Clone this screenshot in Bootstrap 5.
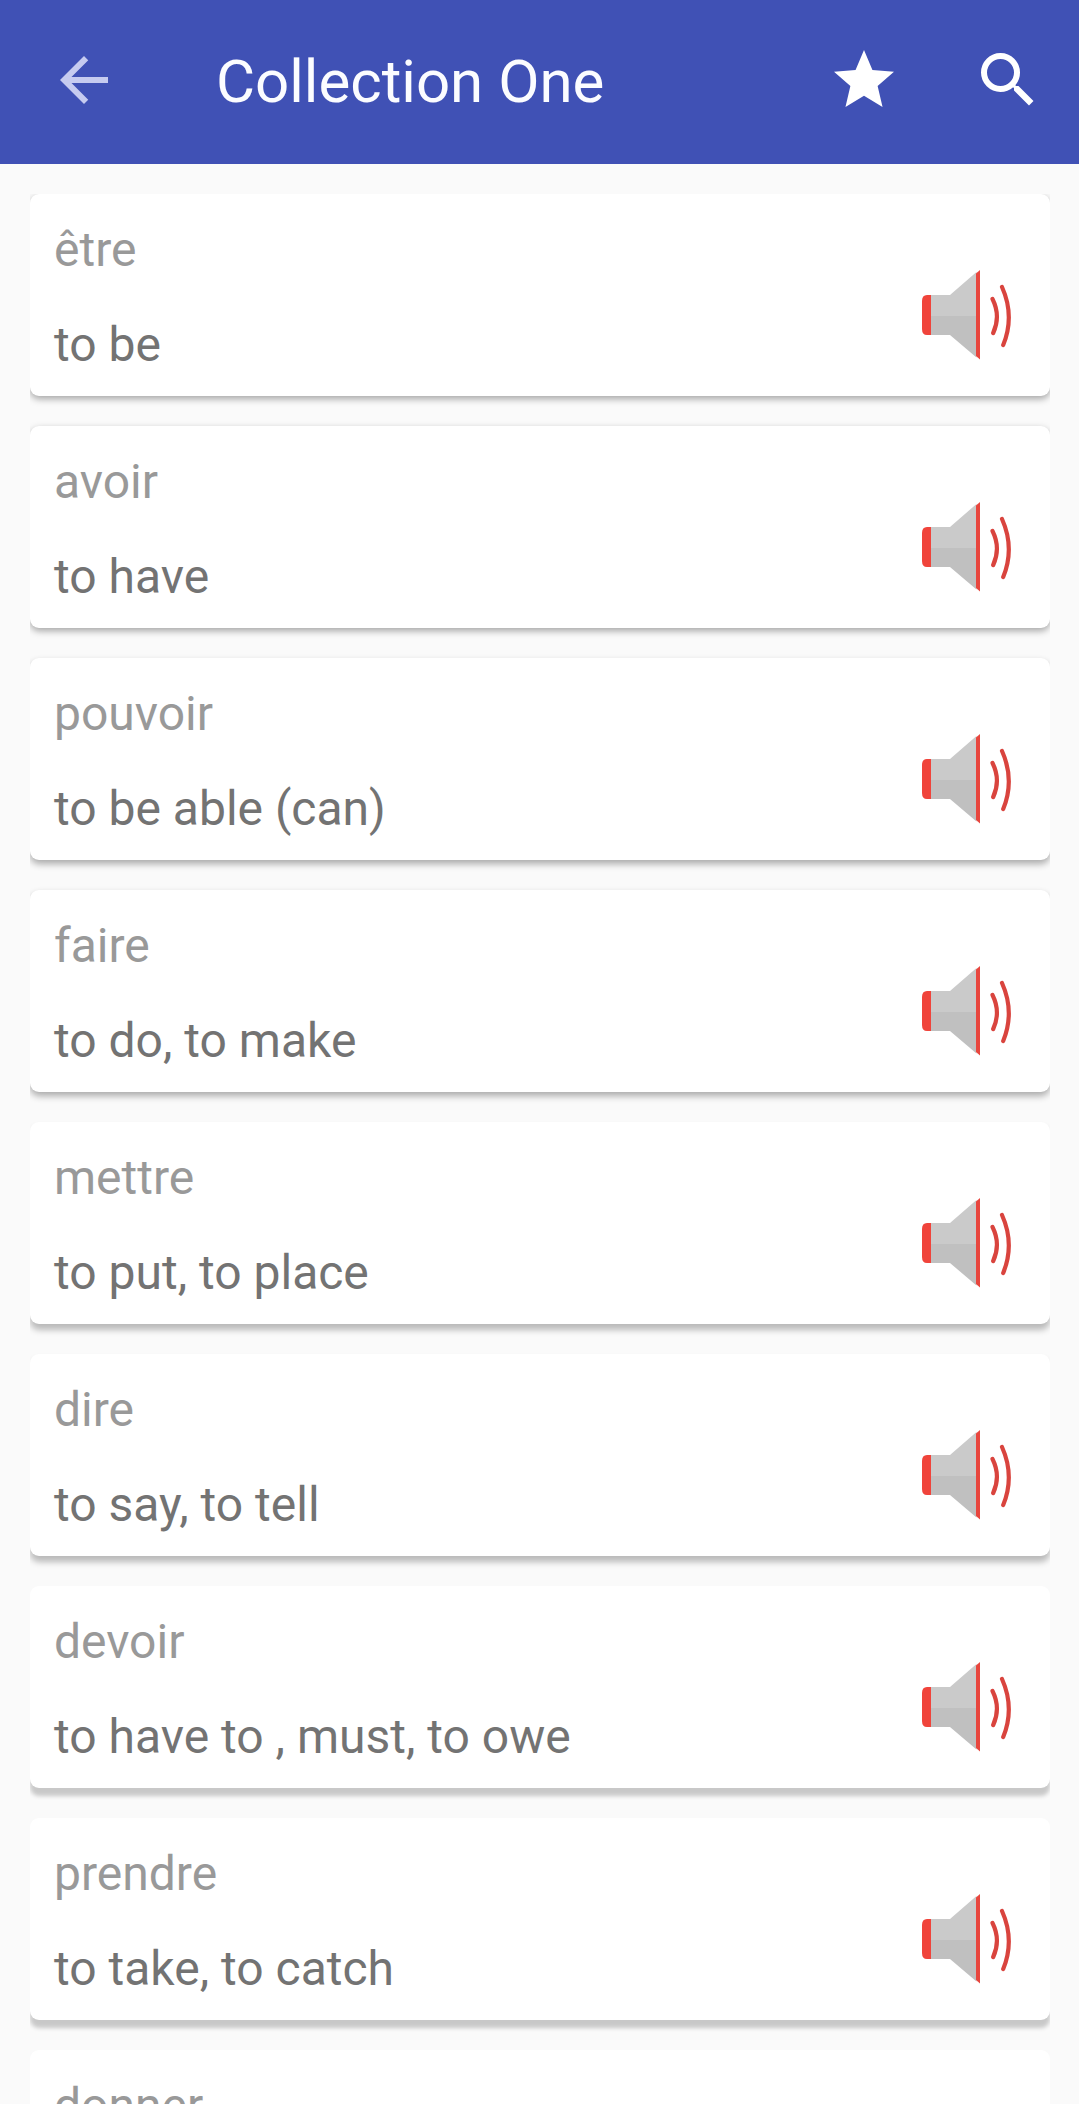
<!DOCTYPE html>
<html lang="en">
<head>
<meta charset="utf-8">
<meta name="viewport" content="width=device-width, initial-scale=1">
<title>Collection One</title>
<link href="https://cdn.jsdelivr.net/npm/bootstrap@5.3.0/dist/css/bootstrap.min.css" rel="stylesheet">
<style>
  body { background: #fafafa; font-family: Roboto, "Noto Sans", sans-serif; }
  .app-bar { height: 164px; padding: 0 35px 4px 48px; background: #4051b5; color: #fff; }
  .app-bar svg { width: 72px; height: 72px; flex: none; display: block; fill: #fff; }
  .app-bar .back-icon { fill: #c6cbf0; }
  .app-title { font-size: 60px; line-height: 72px; margin: 4px 0 0 96px; font-weight: 400; color: #fbfcff; }
  .app-actions { gap: 72px; }
  .word-list { height: 1940px; padding: 30px 29px 0 30px; gap: 30px; }
  .word-slot { clip-path: inset(-12px 0 -24px 0); flex: none; }
  .word-slot:first-child { clip-path: inset(0 0 -24px 0); }
  .word-card { --bs-card-border-radius: 9px; --bs-card-border-width: 0; height: 202px; padding: 28px 36px 0 24px; }
  .term, .meaning { font-size: 48px; line-height: 56px; white-space: pre; }
  .term { color: #999; margin-bottom: 39px; }
  .meaning { color: #737373; }
  .speaker { width: 94px; height: 96px; margin-top: 46px; flex: none; }
  .lift-1 { box-shadow: 0 3px 7px rgba(0,0,0,.34); }
  .lift-2 { box-shadow: 0 4px 7px rgba(0,0,0,.32); }
  .lift-3 { box-shadow: 0 6px 6px rgba(0,0,0,.26); }
  .lift-4 { box-shadow: 0 8px 4px rgba(0,0,0,.2); }
</style>
</head>
<body>
<svg class="d-none" aria-hidden="true">
  <symbol id="speaker" viewBox="0 0 94 96">
    <path fill="#cacaca" d="M10 27H30L56.5 4V48H10z"/>
    <path fill="#c0c0c0" d="M10 48H56.5V89.500L30 67H10z"/>
    <path fill="#f0443b" d="M11 27H7q-5 0-5 6V61q0 6 5 6h4z"/>
    <path fill="#e8463e" d="M56 5.500L60 2V91.500L56 88z"/>
    <path fill="none" stroke="#d9443e" stroke-width="4.200" stroke-linecap="round" d="M72.500 31Q81 48 73.200 65M82 19Q95 48 83.200 77"/>
  </symbol>
</svg>

<header class="app-bar d-flex align-items-center">
  <svg class="back-icon" viewBox="0 0 24 24"><path d="M20 11H7.830l5.590-5.590L12 4l-8 8 8 8 1.410-1.410L7.830 13H20z"/></svg>
  <h1 class="app-title">Collection One</h1>
  <div class="app-actions d-flex ms-auto">
    <svg viewBox="0 0 24 24"><path d="M12 17.270L18.180 21l-1.640-7.030L22 9.240l-7.190-.610L12 2 9.190 8.630 2 9.240l5.460 4.730L5.820 21z"/></svg>
    <svg viewBox="0 0 24 24"><path d="M15.500 14h-.790l-.280-.270A6.470 6.470 0 0 0 16 9.500 6.500 6.500 0 1 0 9.500 16c1.610 0 3.090-.590 4.230-1.570l.270.280v.790l5 4.990L20.490 19zm-6 0a4.500 4.500 0 1 1 0-9 4.500 4.500 0 0 1 0 9z"/></svg>
  </div>
</header>

<main class="word-list d-flex flex-column overflow-hidden">
  <div class="word-slot"><div class="card word-card lift-1 flex-row justify-content-between">
    <div><div class="term">être</div><div class="meaning">to be</div></div>
    <svg class="speaker"><use href="#speaker"/></svg></div></div>
  <div class="word-slot"><div class="card word-card lift-1 flex-row justify-content-between">
    <div><div class="term">avoir</div><div class="meaning">to have</div></div>
    <svg class="speaker"><use href="#speaker"/></svg></div></div>
  <div class="word-slot"><div class="card word-card lift-2 flex-row justify-content-between">
    <div><div class="term">pouvoir</div><div class="meaning">to be able (can)</div></div>
    <svg class="speaker"><use href="#speaker"/></svg></div></div>
  <div class="word-slot"><div class="card word-card lift-2 flex-row justify-content-between">
    <div><div class="term">faire</div><div class="meaning">to do, to make</div></div>
    <svg class="speaker"><use href="#speaker"/></svg></div></div>
  <div class="word-slot"><div class="card word-card lift-3 flex-row justify-content-between">
    <div><div class="term">mettre</div><div class="meaning">to put, to place</div></div>
    <svg class="speaker"><use href="#speaker"/></svg></div></div>
  <div class="word-slot"><div class="card word-card lift-3 flex-row justify-content-between">
    <div><div class="term">dire</div><div class="meaning">to say, to tell</div></div>
    <svg class="speaker"><use href="#speaker"/></svg></div></div>
  <div class="word-slot"><div class="card word-card lift-4 flex-row justify-content-between">
    <div><div class="term">devoir</div><div class="meaning">to have to , must, to owe</div></div>
    <svg class="speaker"><use href="#speaker"/></svg></div></div>
  <div class="word-slot"><div class="card word-card lift-4 flex-row justify-content-between">
    <div><div class="term">prendre</div><div class="meaning">to take, to catch</div></div>
    <svg class="speaker"><use href="#speaker"/></svg></div></div>
  <div class="word-slot"><div class="card word-card lift-4 flex-row justify-content-between">
    <div><div class="term">donner</div></div></div></div>
</main>
<script src="https://cdn.jsdelivr.net/npm/bootstrap@5.3.0/dist/js/bootstrap.bundle.min.js"></script>
</body>
</html>
